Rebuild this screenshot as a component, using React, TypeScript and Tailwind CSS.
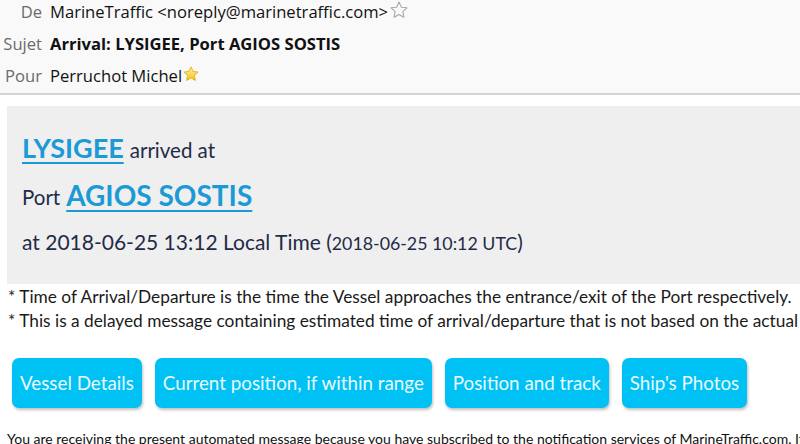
export default function App() {
  const buttons = [
    "Vessel Details",
    "Current position, if within range",
    "Position and track",
    "Ship's Photos",
  ];

  return (
    <div className="w-[800px] h-[444px] overflow-hidden bg-white font-['Lato',sans-serif]">
      <div className="h-[95px] flex flex-col bg-[#f9f9f9] border-b-2 border-[#d4d4d4] font-['Open_Sans',sans-serif] text-[16.6px]">
        <div className="-mt-[4px] flex flex-col">
          <div className="h-8 flex items-center">
            <span className="w-[42px] text-right text-[#6b6b6b]">De</span>
            <span className="ml-2 text-[#111]">MarineTraffic &lt;noreply@marinetraffic.com&gt;</span>
            <svg width="20" height="20" viewBox="0 0 24 24" className="ml-[1px] -mt-1">
              <path d="M12 2.5l2.9 6.1 6.6.8-4.9 4.6 1.3 6.6L12 17.3l-5.9 3.3 1.3-6.6-4.9-4.6 6.6-.8z" fill="none" stroke="#a8a8a8" strokeWidth="1.3" strokeLinejoin="round" />
            </svg>
          </div>
          <div className="h-8 flex items-center">
            <span className="w-[42px] text-right text-[#6b6b6b]">Sujet</span>
            <span className="ml-2 font-bold text-[#111]">Arrival: LYSIGEE, Port AGIOS SOSTIS</span>
          </div>
          <div className="h-8 flex items-center">
            <span className="w-[42px] text-right text-[#6b6b6b]">Pour</span>
            <span className="ml-2 text-[#111]">Perruchot Michel</span>
            <svg width="18" height="18" viewBox="0 0 24 24" className="-mt-1">
              <defs>
                <linearGradient id="g" x1="0" y1="0" x2="0" y2="1">
                  <stop offset="0" stopColor="#fff2a0" />
                  <stop offset="1" stopColor="#f5c318" />
                </linearGradient>
              </defs>
              <path d="M12 2.5l2.9 6.1 6.6.8-4.9 4.6 1.3 6.6L12 17.3l-5.9 3.3 1.3-6.6-4.9-4.6 6.6-.8z" fill="url(#g)" stroke="#d9a400" strokeWidth="1" strokeLinejoin="round" />
            </svg>
          </div>
        </div>
      </div>

      <div className="mt-[11px] ml-[7px] h-[178px] bg-[#efefef] pl-[15px] pt-[19px] text-[#1f2b47]">
        <div className="h-[46px] flex items-center">
          <a className="text-[27px] font-bold text-[#1b9ad6] underline underline-offset-[4px] decoration-2">LYSIGEE</a>
          <span className="ml-[6px] mt-[4px] text-[20.5px]">arrived at</span>
        </div>
        <div className="h-[48px] flex items-center">
          <span className="mt-[4px] text-[20.5px]">Port</span>
          <a className="ml-[6px] text-[28px] font-bold text-[#1b9ad6] underline underline-offset-[4px] decoration-2">AGIOS SOSTIS</a>
        </div>
        <div className="h-[46px] flex items-center">
          <span className="text-[21px]">at 2018-06-25 13:12 Local Time (</span>
          <span className="text-[17.8px] mt-[2px]">2018-06-25 10:12 UTC</span>
          <span className="text-[21px]">)</span>
        </div>
      </div>

      <div className="pl-[8px] pt-[1px] text-[17.3px] leading-[24px] text-[#1a1a1a] whitespace-nowrap">
        <div>* Time of Arrival/Departure is the time the Vessel approaches the entrance/exit of the Port respectively.</div>
        <div>* This is a delayed message containing estimated time of arrival/departure that is not based on the actual</div>
      </div>

      <div className="mt-[25px] ml-[12px] flex gap-[13px]">
        {buttons.map((b) => (
          <div
            key={b}
            className="h-[50px] px-[8px] flex items-center rounded-[7px] bg-[#00c1f4] text-[#e8faff] text-[18.8px] shadow-[1px_2px_3px_rgba(0,0,0,0.25)] whitespace-nowrap"
          >
            {b}
          </div>
        ))}
      </div>

      <div className="mt-[20px] pl-[7px] text-[14px] text-[#111] whitespace-nowrap">
        You are receiving the present automated message because you have subscribed to the notification services of MarineTraffic.com. If
      </div>
    </div>
  );
}
